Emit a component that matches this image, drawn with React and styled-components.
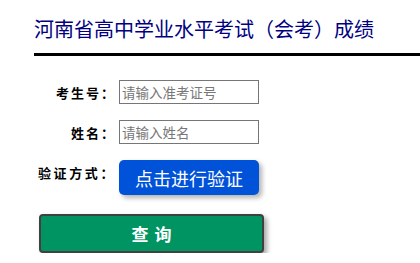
import React, { useState } from "react";
import styled, { createGlobalStyle } from "styled-components";

const GlobalStyle = createGlobalStyle`
  body {
    margin: 0;
    background: #fff;
    font-family: "Noto Sans CJK SC", "Noto Sans", sans-serif;
  }
`;

const Page = styled.div`
  padding: 16px 0 0 34px;
`;

const Title = styled.h1`
  margin: 0;
  font-size: 20px;
  font-weight: normal;
  line-height: 26px;
  color: #000080;
  padding-bottom: 11px;
  border-bottom: 3px solid #000;
`;

const Form = styled.form`
  display: grid;
  grid-template-columns: 82px 140px;
  column-gap: 3px;
  row-gap: 16px;
  margin-top: 24px;
`;

const Label = styled.label`
  font-size: 13px;
  font-weight: bold;
  letter-spacing: ${(p) => (p.$wide ? "2.6px" : "2px")};
  color: #000;
  text-align: right;
  align-self: ${(p) => (p.$top ? "start" : "center")};
  padding-top: ${(p) => (p.$top ? "3px" : "0")};
  white-space: nowrap;
`;

const Input = styled.input`
  box-sizing: border-box;
  width: 140px;
  height: 24px;
  border: 1px solid #767676;
  padding: 0 2px;
  font-size: 13.5px;
  font-family: inherit;
  outline: 0;
  &::placeholder {
    color: #777;
  }
`;

const VerifyButton = styled.button`
  box-sizing: border-box;
  width: 140px;
  height: 35px;
  border: 0;
  border-radius: 5px;
  background: #0052d9;
  color: #fff;
  font-size: 18px;
  font-family: inherit;
  cursor: pointer;
  box-shadow: 3px 3px 5px rgba(0, 0, 0, 0.3);
`;

const SubmitButton = styled.button`
  grid-column: 1 / -1;
  box-sizing: border-box;
  margin: 3px 0 0 5px;
  width: 225px;
  height: 39px;
  border: 2px solid #404040;
  border-radius: 4px;
  background: #009463;
  color: #fff;
  font-size: 17px;
  font-weight: bold;
  letter-spacing: 6px;
  text-indent: 6px;
  font-family: inherit;
  cursor: pointer;
  box-shadow: 3px 3px 5px rgba(0, 0, 0, 0.35);
`;

const App = () => {
  const [examNo, setExamNo] = useState("");
  const [name, setName] = useState("");

  return (
    <>
      <GlobalStyle />
      <Page>
        <Title>河南省高中学业水平考试（会考）成绩</Title>
        <Form onSubmit={(e) => e.preventDefault()}>
          <Label>考生号：</Label>
          <Input
            placeholder="请输入准考证号"
            value={examNo}
            onChange={(e) => setExamNo(e.target.value)}
          />
          <Label>姓名：</Label>
          <Input
            placeholder="请输入姓名"
            value={name}
            onChange={(e) => setName(e.target.value)}
          />
          <Label $top $wide>验证方式：</Label>
          <VerifyButton type="button">点击进行验证</VerifyButton>
          <SubmitButton type="submit">查询</SubmitButton>
        </Form>
      </Page>
    </>
  );
};

export default App;
